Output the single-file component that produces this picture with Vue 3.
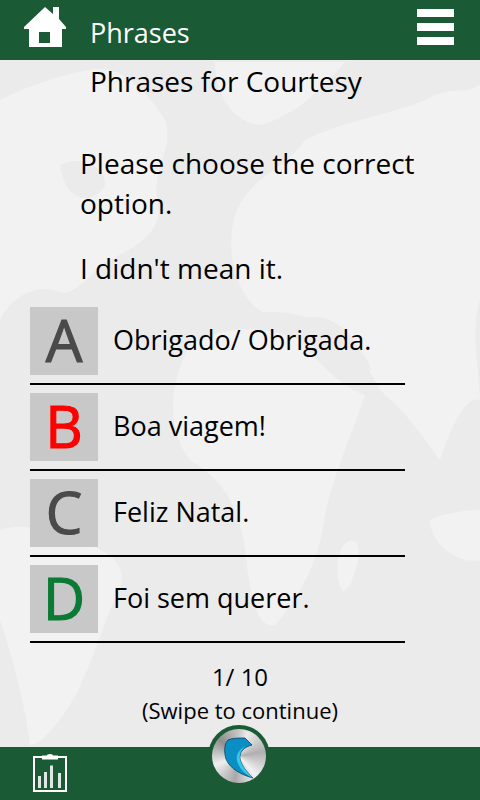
<script setup>
const options = [
  { letter: 'A', text: 'Obrigado/ Obrigada.', color: '#4a4a4a' },
  { letter: 'B', text: 'Boa viagem!', color: '#ff0000' },
  { letter: 'C', text: 'Feliz Natal.', color: '#4a4a4a' },
  { letter: 'D', text: 'Foi sem querer.', color: '#0b7a35' }
]
</script>

<template>
  <div class="screen">
    <svg class="map" viewBox="0 0 480 800" aria-hidden="true">
      <g fill="#f2f2f2">
        <path d="M0 100 C30 85 60 75 90 70 C120 62 150 95 165 120 C175 150 150 170 158 200 C165 235 130 250 105 262 C85 280 70 300 55 290 C30 285 10 300 0 320Z" />
        <path d="M215 62 C250 62 300 62 345 62 C320 90 300 112 262 125 C238 125 215 100 215 62Z" />
        <path d="M235 215 C250 175 280 175 305 140 C345 120 390 115 425 100 C450 85 465 95 480 85 V300 C470 330 480 380 480 400 C465 395 450 430 440 460 C425 440 405 410 385 395 C375 385 360 350 345 330 C320 320 290 310 262 312 C235 295 225 250 235 215Z" />
        <path d="M190 345 C225 325 265 325 300 340 C315 360 345 390 365 395 C350 440 335 470 325 515 C320 555 305 590 275 625 C255 630 250 590 245 550 C240 510 225 480 190 460 C170 435 165 390 190 345Z" />
        <path d="M342 547 C352 535 362 540 358 560 C354 580 346 595 342 590 C336 580 336 560 342 547Z" />
        <path d="M0 530 C30 520 55 535 90 545 C125 560 130 575 110 610 C95 650 85 680 70 705 C50 735 38 745 30 745 C25 700 10 650 0 620Z" />
        <path d="M430 520 C450 510 480 510 480 510 V560 C460 565 430 545 430 520Z" />
      </g>
      <g fill="#ebebeb">
        <path d="M60 165 C80 155 105 165 105 185 C95 205 65 205 60 165Z" />
        <path d="M300 320 C325 310 350 325 372 370 C350 365 325 335 300 320Z" />
      </g>
    </svg>

    <header class="top">
      <svg class="home" viewBox="0 0 42 40" aria-hidden="true">
        <path fill="#fff" fill-rule="evenodd" d="M21 0 L29 7 V0 H35 V12 L42 20 V22 H38 V40 H5 V22 H0 V20Z M15 25 V36 H26 V25Z" />
      </svg>
      <h1 class="title">Phrases</h1>
      <div class="burger" aria-hidden="true"><i></i><i></i><i></i></div>
    </header>

    <main class="body">
      <h2 class="subtitle">Phrases for Courtesy</h2>
      <p class="prompt">Please choose the correct option.</p>
      <p class="phrase">I didn't mean it.</p>

      <ul class="options">
        <li v-for="o in options" :key="o.letter" class="option">
          <span class="tile" :style="{ color: o.color }"><span class="letter">{{ o.letter }}</span></span>
          <span class="answer">{{ o.text }}</span>
        </li>
      </ul>

      <div class="progress">
        <div class="count">1/ 10</div>
        <div class="hint">(Swipe to continue)</div>
      </div>
    </main>

    <footer class="bottom">
      <svg class="report" viewBox="0 0 34 38" aria-hidden="true">
        <path fill="none" stroke="#fff" stroke-width="2" d="M9 3 H1 V37 H33 V3 H25" />
        <path fill="#fff" d="M9 1.500 H14 A3 1.500 0 0 1 20 1.500 H25 V5.500 H9Z" />
        <path fill="#dfe8e2" d="M5 22 H8 V34 H5Z M11 18 H14 V34 H11Z M17 11.500 H20 V34 H17Z M25 19 H28 V34 H25Z" />
      </svg>
      <div class="badge">
        <div class="disc">
          <svg viewBox="0 0 54 54" aria-hidden="true">
            <path fill="#0a8fc4" stroke="#0b3e63" stroke-width="0.8" d="M16 11 C20 9 27 9 33 9 L40 16 C32 18 27 23 28 30 C30 38 36 44 41 49 C30 46 18 40 14 30 C12 23 12 15 16 11Z" />
            <path fill="#35c6e8" d="M28 30 C30 38 36 44 41 49 C34 46 28 41 25 32 C24 26 26 22 33 17 C29 22 27 25 28 30Z" />
          </svg>
        </div>
      </div>
    </footer>
  </div>
</template>

<style scoped>
.screen {
  position: relative;
  width: 480px;
  height: 800px;
  overflow: hidden;
  background: #ebebeb;
  color: #000;
  font-family: "Open Sans", "Noto Sans", sans-serif;
  display: flex;
  flex-direction: column;
}
.map {
  position: absolute;
  inset: 0;
  width: 480px;
  height: 800px;
}
.top {
  position: relative;
  height: 60px;
  flex: none;
  background: #1a5a35;
  display: flex;
  align-items: center;
}
.home {
  width: 42px;
  height: 40px;
  margin: 0 0 6px 24px;
  flex: none;
}
.title {
  margin: 4px 0 0 24px;
  font-size: 27px;
  font-weight: 400;
  color: #fff;
  flex: 1;
}
.burger {
  width: 37px;
  margin: 0 26px 6px 0;
  display: flex;
  flex-direction: column;
  gap: 6px;
}
.burger i {
  display: block;
  height: 8px;
  background: #fff;
  filter: blur(0.5px);
}
.body {
  position: relative;
  flex: 1;
  display: flex;
  flex-direction: column;
}
.subtitle {
  margin: 2px 0 0 90px;
  font-size: 28px;
  line-height: 38px;
  font-weight: 400;
}
.prompt {
  margin: 43px 30px 0 80px;
  font-size: 28px;
  line-height: 40px;
}
.phrase {
  margin: 27px 0 0 80px;
  font-size: 28px;
  line-height: 36px;
}
.options {
  list-style: none;
  margin: 21px 0 0 30px;
  padding: 0;
  width: 375px;
}
.option {
  display: flex;
  align-items: flex-start;
  height: 76px;
  border-bottom: 2px solid #000;
  margin-bottom: 8px;
}
.tile {
  width: 68px;
  height: 68px;
  flex: none;
  box-sizing: border-box;
  padding-bottom: 3px;
  background: #c8c8c8;
  display: flex;
  align-items: center;
  justify-content: center;
}
.letter {
  font-size: 58px;
  line-height: 64px;
  -webkit-text-stroke: 1.2px currentColor;
  filter: blur(0.4px);
}
.answer {
  margin-left: 15px;
  line-height: 66px;
  font-size: 27px;
}
.progress {
  text-align: center;
  margin-top: 11px;
}
.count {
  font-size: 24px;
  line-height: 30px;
}
.hint {
  margin-top: 2px;
  font-size: 22px;
  line-height: 32px;
}
.bottom {
  position: relative;
  height: 53px;
  flex: none;
  background: #1a5a35;
  display: flex;
  align-items: center;
}
.report {
  width: 34px;
  height: 38px;
  margin: -2px 0 0 33px;
}
.badge {
  position: absolute;
  left: 208px;
  top: -22px;
  width: 62px;
  height: 62px;
  border-radius: 50%;
  background: #1a5a35;
  display: flex;
  align-items: center;
  justify-content: center;
}
.disc {
  width: 54px;
  height: 54px;
  border-radius: 50%;
  background: conic-gradient(from 20deg, #ececec, #b0b0b0 60deg, #f2f2f2 120deg, #a8a8a8 170deg, #efefef 230deg, #8e8e8e 290deg, #c8c8c8 340deg, #ececec);
}
.disc svg {
  display: block;
  width: 54px;
  height: 54px;
}
</style>
